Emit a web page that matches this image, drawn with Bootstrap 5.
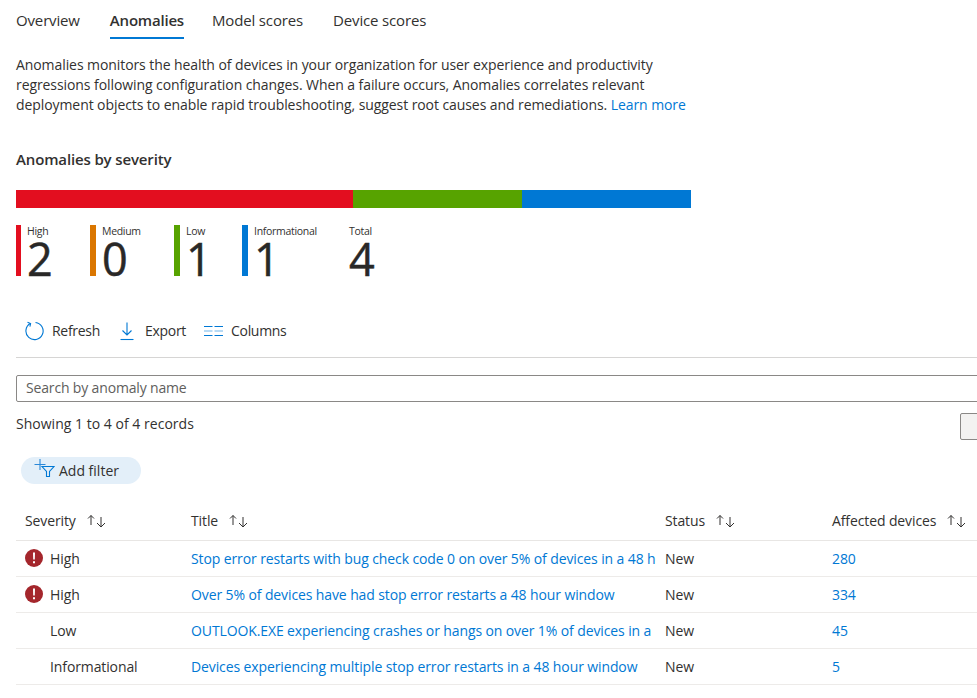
<!DOCTYPE html>
<html lang="en">
<head>
<meta charset="utf-8">
<title>Anomalies</title>
<link href="https://cdn.jsdelivr.net/npm/bootstrap@5.3.0/dist/css/bootstrap.min.css" rel="stylesheet">
<style>
html,body{overflow:hidden;height:100%}
body{font-family:"Open Sans","Noto Sans","Liberation Sans",sans-serif;font-size:14px;line-height:20px;color:#323130;letter-spacing:-.08px;background:#fff}
.pg{width:1300px;padding:0 0 0 16px}
.tabbar{height:40px}
.tabbar .nav-link{padding:0;margin-right:30px;line-height:41px;color:#323130;border:0;border-bottom:2px solid transparent;height:40px;font-size:15px;letter-spacing:-.15px}
.tabbar .nav-link.active{font-weight:600;color:#323130;border-bottom-color:#0078d4;height:39px;letter-spacing:-.2px;margin-right:28px}
.intro{width:690px;margin:15px 0 0}
.intro a,.tlink{color:#0078d4;text-decoration:none}
.sevhead{font-weight:600;font-size:15px;letter-spacing:-.14px;margin:34px 0 0;line-height:20px}
.sevbar{width:675px;height:18px;margin-top:21px}
.sevbar div{height:18px}
.legend{margin-top:17px;height:51px}
.legitem{display:flex;height:51px}
.legstripe{width:5px;height:51px;margin-right:6px}
.leglabel{font-size:10.5px;line-height:12px;letter-spacing:-.3px}
.legnum{font-size:45px;line-height:36px;letter-spacing:0;color:#292827;margin-top:4px;-webkit-text-stroke:.5px #292827}
.toolbar{margin-top:40px;height:42px;border-bottom:1px solid #d6d5d4;width:1200px;padding-left:8px;padding-bottom:12px}
.toolbtn{display:flex;align-items:center;background:none;border:0;padding:0;color:#323130;font-size:14px;letter-spacing:-.3px;line-height:20px}
.exptxt{margin-left:3px}
.srch{width:1200px;height:27px;margin-top:17px;border:1px solid #8a8886;border-radius:2px;padding:0 9px 2px;font-size:14px;line-height:23px;letter-spacing:-.16px;color:#605e5c}
.srch::placeholder{color:#605e5c;opacity:1}
.srch:focus{box-shadow:none;border-color:#8a8886}
.showrow{height:27px;margin-top:11px;width:984px}
.showtxt{margin-bottom:5px;letter-spacing:.02px}
.showbtn{width:40px;height:27px;background:#f3f2f1;border:1px solid #8a8886;border-radius:2px;margin-left:auto}
.pillbtn{margin:17px 0 0 5px;width:120px;height:27px;border-radius:14px;background:#e3eff9;color:#323130;border:0;display:flex;align-items:center;padding:0 0 0 13px;font-size:14px;letter-spacing:0;line-height:20px}
.grid{table-layout:fixed;width:1200px;margin:19px 0 0;border-collapse:collapse}
.grid th,.grid td{padding:0 0 0 9px;height:36px;border-bottom:1px solid #edebe9;font-size:14px;white-space:nowrap;overflow:hidden;vertical-align:middle;color:#323130;box-shadow:none;font-weight:400;letter-spacing:-.11px}
.grid td{padding-top:2px}
.grid th{height:37px;border-bottom-color:#e8e6e4}
.grid td.tcell{padding-right:0}
.sortarr{margin-left:11px;vertical-align:-2px}
.sevcell{display:flex;align-items:center}
.sevico{width:18px;height:18px;margin-right:7px;margin-top:-3px;flex:none}
.sevgap{width:25px;flex:none}
</style>
</head>
<body>
<div class="pg">
  <ul class="nav tabbar">
    <li class="nav-item"><a class="nav-link" href="#">Overview</a></li>
    <li class="nav-item"><a class="nav-link active" href="#">Anomalies</a></li>
    <li class="nav-item"><a class="nav-link" href="#">Model scores</a></li>
    <li class="nav-item"><a class="nav-link" href="#">Device scores</a></li>
  </ul>
  <p class="intro">Anomalies monitors the health of devices in your organization for user experience and productivity regressions following configuration changes. When a failure occurs, Anomalies correlates relevant deployment objects to enable rapid troubleshooting, suggest root causes and remediations. <a href="#">Learn more</a></p>
  <h2 class="sevhead">Anomalies by severity</h2>
  <div class="sevbar d-flex">
    <div style="width:337px;background:#e30e1f"></div>
    <div style="width:169px;background:#57a300"></div>
    <div style="width:169px;background:#0078d4"></div>
  </div>
  <div class="legend d-flex">
    <div class="legitem" style="width:74px"><div class="legstripe" style="background:#e30e1f"></div><div><div class="leglabel">High</div><div class="legnum">2</div></div></div>
    <div class="legitem" style="width:84px"><div class="legstripe" style="background:#da7600;width:6px"></div><div><div class="leglabel">Medium</div><div class="legnum">0</div></div></div>
    <div class="legitem" style="width:68px"><div class="legstripe" style="background:#57a300;width:6px"></div><div><div class="leglabel">Low</div><div class="legnum">1</div></div></div>
    <div class="legitem" style="width:107px"><div class="legstripe" style="background:#0078d4;width:6px"></div><div><div class="leglabel">Informational</div><div class="legnum">1</div></div></div>
    <div class="legitem"><div><div class="leglabel">Total</div><div class="legnum">4</div></div></div>
  </div>
  <div class="toolbar d-flex align-items-center">
    <button class="toolbtn" type="button" style="width:96px">
      <svg width="20" height="20" viewBox="0 0 20 20" fill="none" stroke="#0078d4" stroke-width="1.1" class="me-2"><path d="M6.2 2.6A8.6 8.6 0 1 0 11.500 1.500"/><path d="M3.500 1.200 6.600 2.500 5.900 5.600"/></svg>Refresh</button>
    <button class="toolbtn" type="button" style="width:84px">
      <svg width="14" height="20" viewBox="0 0 14 20" fill="none" stroke="#0078d4" stroke-width="1.1" class="me-2"><path d="M7 1.500V14M2.500 9.500 7 14l4.500-4.500"/><path d="M.5 18.500h13"/></svg><span class="exptxt">Export</span></button>
    <button class="toolbtn" type="button">
      <svg width="19" height="12" viewBox="0 0 19 12" fill="none" stroke-width="1.1" class="me-2"><path d="M0 1.500h8.500M10.500 1.500h8.500M0 10.500h8.500M10.500 10.500h8.500" stroke="#0078d4"/><path d="M0 6h8.500M10.500 6h8.500" stroke="#71b5ec"/></svg>Columns</button>
  </div>
  <input class="form-control srch" type="text" placeholder="Search by anomaly name">
  <div class="showrow d-flex align-items-center">
    <span class="showtxt">Showing 1 to 4 of 4 records</span>
    <button class="showbtn" type="button" aria-label="More"></button>
  </div>
  <button class="pillbtn" type="button">
    <svg width="21" height="19" viewBox="0 0 21 19" fill="none" class="me-1" style="margin-top:-6px;flex:none"><path d="M6 1v11M.5 6.500h11" stroke="#2b88d8" stroke-width="1.100"/><path d="M8 8.500h12l-4.500 5v5h-3v-5z" stroke="#0078d4" stroke-width="1.100"/></svg><span>Add filter</span></button>
  <table class="table grid">
    <colgroup><col style="width:166px"><col style="width:474px"><col style="width:167px"><col></colgroup>
    <thead><tr>
      <th>Severity<svg class="sortarr" width="19" height="14" viewBox="0 0 19 14" fill="none" stroke="#323130" stroke-width="1"><path d="M4 11V1.500M1 4.500 4 1.500 7 4.500"/><path d="M14 3V13M10 9 14 13 18 9"/></svg></th>
      <th>Title<svg class="sortarr" width="19" height="14" viewBox="0 0 19 14" fill="none" stroke="#323130" stroke-width="1"><path d="M4 11V1.500M1 4.500 4 1.500 7 4.500"/><path d="M14 3V13M10 9 14 13 18 9"/></svg></th>
      <th>Status<svg class="sortarr" width="19" height="14" viewBox="0 0 19 14" fill="none" stroke="#323130" stroke-width="1"><path d="M4 11V1.500M1 4.500 4 1.500 7 4.500"/><path d="M14 3V13M10 9 14 13 18 9"/></svg></th>
      <th>Affected devices<svg class="sortarr" width="19" height="14" viewBox="0 0 19 14" fill="none" stroke="#323130" stroke-width="1"><path d="M4 11V1.500M1 4.500 4 1.500 7 4.500"/><path d="M14 3V13M10 9 14 13 18 9"/></svg></th>
    </tr></thead>
    <tbody>
      <tr>
        <td><div class="sevcell"><svg class="sevico" viewBox="0 0 18 18"><circle cx="9" cy="9" r="9" fill="#a4262c"/><path d="M8 3.500h2l-.2 7H8.200zM8 12.300h2v2H8z" fill="#fff"/></svg>High</div></td>
        <td class="tcell"><a class="tlink" href="#">Stop error restarts with bug check code 0 on over 5% of devices in a 48 hour window</a></td><td>New</td><td><a class="tlink" href="#">280</a></td>
      </tr>
      <tr>
        <td><div class="sevcell"><svg class="sevico" viewBox="0 0 18 18"><circle cx="9" cy="9" r="9" fill="#a4262c"/><path d="M8 3.500h2l-.2 7H8.200zM8 12.300h2v2H8z" fill="#fff"/></svg>High</div></td>
        <td class="tcell"><a class="tlink" href="#">Over 5% of devices have had stop error restarts a 48 hour window</a></td><td>New</td><td><a class="tlink" href="#">334</a></td>
      </tr>
      <tr>
        <td><div class="sevcell"><span class="sevgap"></span>Low</div></td>
        <td class="tcell"><a class="tlink" href="#">OUTLOOK.EXE experiencing crashes or hangs on over 1% of devices in a</a></td><td>New</td><td><a class="tlink" href="#">45</a></td>
      </tr>
      <tr>
        <td><div class="sevcell"><span class="sevgap"></span>Informational</div></td>
        <td class="tcell"><a class="tlink" href="#">Devices experiencing multiple stop error restarts in a 48 hour window</a></td><td>New</td><td><a class="tlink" href="#">5</a></td>
      </tr>
    </tbody>
  </table>
</div>
<script src="https://cdn.jsdelivr.net/npm/bootstrap@5.3.0/dist/js/bootstrap.bundle.min.js"></script>
</body>
</html>
